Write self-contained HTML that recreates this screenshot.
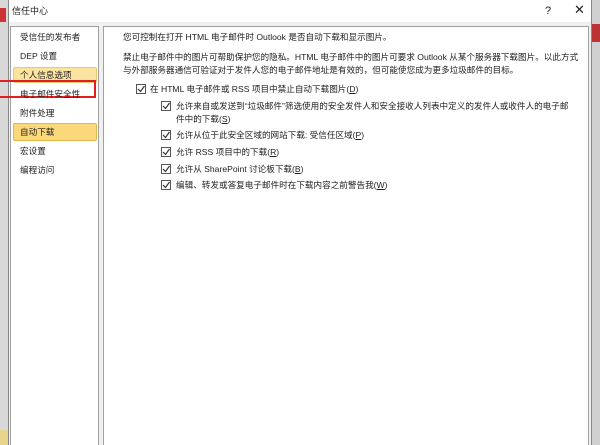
<!DOCTYPE html>
<html><head><meta charset="utf-8"><style>
*{margin:0;padding:0;box-sizing:border-box}
body{width:600px;height:445px;overflow:hidden;background:#f0f0f0;position:relative;font-family:"Liberation Sans","Noto Sans CJK SC",sans-serif;font-size:8.6px;color:#1e1e1e}
.a{position:absolute;white-space:nowrap;line-height:12px}
.cb{position:absolute;width:10px;height:10px;border:1px solid #555;background:#fff}
.cb svg{position:absolute;left:0;top:0}
u{text-decoration:underline}
</style></head><body>
<div style="position:absolute;left:0;top:0;width:8px;height:445px;background:#d8d8d8"></div>
<div style="position:absolute;left:0;top:8px;width:6px;height:14px;background:#c33"></div>
<div style="position:absolute;left:0;top:430px;width:8px;height:15px;background:#e8d48a"></div>
<div style="position:absolute;left:592px;top:0;width:8px;height:445px;background:#d0d0d0"></div>
<div style="position:absolute;left:592px;top:24px;width:8px;height:18px;background:#b33"></div>
<div style="position:absolute;left:8px;top:0;width:584px;height:445px;background:#f0f0f0;border-left:1px solid #888;border-right:1px solid #888"></div>
<div style="position:absolute;left:9px;top:0;width:582px;height:22px;background:#fff"></div>
<div class="a" style="left:12px;top:5px;font-size:9px;color:#222">信任中心</div>
<div class="a" style="left:545px;top:5px;font-size:11px;color:#222">?</div>
<div class="a" style="left:574px;top:4px;font-size:13px;color:#222">✕</div>
<div style="position:absolute;left:10px;top:26px;width:89px;height:419px;background:#fff;border:1px solid #a0a0a0;border-bottom:none"></div>
<div style="position:absolute;left:103px;top:26px;width:486px;height:419px;background:#fff;border:1px solid #a0a0a0;border-bottom:none"></div>
<div style="position:absolute;left:13px;top:67px;width:84px;height:16px;background:#fbe3a0;border:1px solid #e8c870;border-radius:2px"></div>
<div style="position:absolute;left:13px;top:123px;width:84px;height:18px;background:#fbd97a;border:1px solid #e2b84c;border-radius:2px"></div>
<div style="position:absolute;left:-2px;top:80px;width:98px;height:18px;border:2px solid #e02020"></div>
<div class="a" style="left:20px;top:31px">受信任的发布者</div>
<div class="a" style="left:20px;top:50px">DEP 设置</div>
<div class="a" style="left:20px;top:69px">个人信息选项</div>
<div class="a" style="left:20px;top:88px">电子邮件安全性</div>
<div class="a" style="left:20px;top:107px">附件处理</div>
<div class="a" style="left:20px;top:126px">自动下载</div>
<div class="a" style="left:20px;top:145px">宏设置</div>
<div class="a" style="left:20px;top:164px">编程访问</div>
<div class="a" style="left:123px;top:31px">您可控制在打开 HTML 电子邮件时 Outlook 是否自动下载和显示图片。</div>
<div class="a" style="left:123px;top:51px">禁止电子邮件中的图片可帮助保护您的隐私。HTML 电子邮件中的图片可要求 Outlook 从某个服务器下载图片。以此方式</div>
<div class="a" style="left:123px;top:64px">与外部服务器通信可验证对于发件人您的电子邮件地址是有效的，但可能使您成为更多垃圾邮件的目标。</div>
<div class="a" style="left:150px;top:83px">在 HTML 电子邮件或 RSS 项目中禁止自动下载图片(<u>D</u>)</div>
<div class="a" style="left:176px;top:100px">允许来自或发送到“垃圾邮件”筛选使用的安全发件人和安全接收人列表中定义的发件人或收件人的电子邮</div>
<div class="a" style="left:176px;top:113px">件中的下载(<u>S</u>)</div>
<div class="a" style="left:176px;top:129px">允许从位于此安全区域的网站下载: 受信任区域(<u>P</u>)</div>
<div class="a" style="left:176px;top:146px">允许 RSS 项目中的下载(<u>R</u>)</div>
<div class="a" style="left:176px;top:163px">允许从 SharePoint 讨论板下载(<u>B</u>)</div>
<div class="a" style="left:176px;top:179px">编辑、转发或答复电子邮件时在下载内容之前警告我(<u>W</u>)</div>
<div class="cb" style="left:136px;top:84px"><svg width="8" height="8"><path d="M1 4 L3.5 6.5 L7.5 1" stroke="#333" fill="none" stroke-width="1.2"/></svg></div>
<div class="cb" style="left:161px;top:101px"><svg width="8" height="8"><path d="M1 4 L3.5 6.5 L7.5 1" stroke="#333" fill="none" stroke-width="1.2"/></svg></div>
<div class="cb" style="left:161px;top:130px"><svg width="8" height="8"><path d="M1 4 L3.5 6.5 L7.5 1" stroke="#333" fill="none" stroke-width="1.2"/></svg></div>
<div class="cb" style="left:161px;top:147px"><svg width="8" height="8"><path d="M1 4 L3.5 6.5 L7.5 1" stroke="#333" fill="none" stroke-width="1.2"/></svg></div>
<div class="cb" style="left:161px;top:164px"><svg width="8" height="8"><path d="M1 4 L3.5 6.5 L7.5 1" stroke="#333" fill="none" stroke-width="1.2"/></svg></div>
<div class="cb" style="left:161px;top:180px"><svg width="8" height="8"><path d="M1 4 L3.5 6.5 L7.5 1" stroke="#333" fill="none" stroke-width="1.2"/></svg></div>
</body></html>
